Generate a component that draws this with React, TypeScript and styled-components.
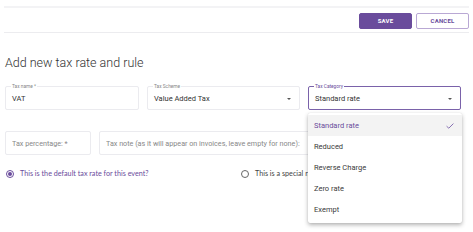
import React from "react";
import styled, { createGlobalStyle } from "styled-components";

const Global = createGlobalStyle`
  html, body { margin: 0; padding: 0; background: #fff; }
  body { font-family: Roboto, "Liberation Sans", sans-serif; color: #333; }
  * { box-sizing: border-box; }
`;

const Page = styled.div`
  width: 473px;
  height: 232px;
  overflow: hidden;
  padding: 6px 4px 0 4px;
`;

const Toolbar = styled.div`
  border-top: 2px solid #f3f3f5;
  border-bottom: 1px solid #ececef;
  height: 27px;
  display: flex;
  justify-content: flex-end;
  align-items: center;
  gap: 4px;
  padding-top: 1px;
`;

const Button = styled.button<{ $primary?: boolean }>`
  width: 53px;
  height: 16px;
  border-radius: 2px;
  font-family: Roboto, "Liberation Sans", sans-serif;
  font-weight: 700;
  font-size: 6px;
  letter-spacing: 0.2px;
  padding: 0;
  cursor: pointer;
  background: ${(p) => (p.$primary ? "#6a4c9c" : "#fff")};
  color: ${(p) => (p.$primary ? "#fff" : "#6a4c9c")};
  border: 1px solid ${(p) => (p.$primary ? "#6a4c9c" : "#b9a8d4")};
`;

const Title = styled.h1`
  margin: 22px 0 0 1px;
  font-size: 12.5px;
  font-weight: 300;
  color: #333;
  line-height: 16px;
`;

const Row = styled.div<{ $top: number }>`
  display: flex;
  gap: 8px;
  margin-top: ${(p) => p.$top}px;
  margin-left: 1px;
`;

const Field = styled.div<{ $w: number; $active?: boolean }>`
  position: relative;
  width: ${(p) => p.$w}px;
  height: 24px;
  border: 1px solid ${(p) => (p.$active ? "#7a62aa" : "#ebebef")};
  border-radius: 2px;
  display: flex;
  align-items: center;
  padding: 1px 6px 0 6px;
  font-size: 7.5px;
  color: #333;
  background: #fff;
`;

const Legend = styled.span<{ $active?: boolean }>`
  position: absolute;
  top: -3px;
  left: 5px;
  padding: 0 1px;
  background: #fff;
  font-size: 4.8px;
  line-height: 5px;
  color: ${(p) => (p.$active ? "#6a4c9c" : "#888")};
`;

const Placeholder = styled.span`
  color: #888;
  font-size: 7.2px;
  white-space: nowrap;
  overflow: hidden;
`;

const Value = styled.span`
  flex: 1;
`;

const Caret = styled.span`
  width: 0;
  height: 0;
  border-left: 2.5px solid transparent;
  border-right: 2.5px solid transparent;
  border-top: 2.5px solid #555;
  margin-right: 2px;
`;

const RadioRow = styled.div`
  display: flex;
  margin-top: 14px;
  margin-left: 2px;
`;

const RadioItem = styled.label<{ $w?: number; $checked?: boolean }>`
  display: flex;
  align-items: center;
  gap: 6px;
  width: ${(p) => (p.$w ? `${p.$w}px` : "auto")};
  font-family: Lato, "Liberation Sans", sans-serif;
  font-size: 7.2px;
  color: ${(p) => (p.$checked ? "#6a4c9c" : "#444")};
  white-space: nowrap;
`;

const RadioCircle = styled.span<{ $checked?: boolean }>`
  width: 8px;
  height: 8px;
  border-radius: 50%;
  border: 1px solid ${(p) => (p.$checked ? "#6a4c9c" : "#666")};
  display: flex;
  align-items: center;
  justify-content: center;
  &::after {
    content: "";
    width: 4px;
    height: 4px;
    border-radius: 50%;
    background: ${(p) => (p.$checked ? "#6a4c9c" : "transparent")};
  }
`;

const Menu = styled.ul`
  position: absolute;
  top: 26px;
  left: -1px;
  width: 154px;
  margin: 0;
  padding: 2px 0 3px 0;
  list-style: none;
  background: #fff;
  box-shadow: 0 2px 4px rgba(0, 0, 0, 0.3), 0 0 1px rgba(0, 0, 0, 0.15);
  border-radius: 2px;
  z-index: 5;
`;

const MenuItem = styled.li<{ $selected?: boolean }>`
  height: 21px;
  display: flex;
  align-items: center;
  justify-content: space-between;
  padding: 0 8px 0 6px;
  font-size: 7.5px;
  color: ${(p) => (p.$selected ? "#6a4c9c" : "#3a3a3a")};
  background: ${(p) => (p.$selected ? "#f3f3f3" : "#fff")};
`;

const Check = () => (
  <svg width="8" height="6" viewBox="0 0 8 6">
    <path d="M0.6 3.2 L2.8 5.2 L7.4 0.6" fill="none" stroke="#7a62aa" strokeWidth="0.9" />
  </svg>
);

const options = ["Standard rate", "Reduced", "Reverse Charge", "Zero rate", "Exempt"];

export default function App() {
  return (
    <>
      <Global />
      <Page>
        <Toolbar>
          <Button $primary>SAVE</Button>
          <Button>CANCEL</Button>
        </Toolbar>
        <Title>Add new tax rate and rule</Title>
        <Row $top={15}>
          <Field $w={134}>
            <Legend>Tax name *</Legend>
            <Value>VAT</Value>
          </Field>
          <Field $w={153}>
            <Legend>Tax Scheme</Legend>
            <Value>Value Added Tax</Value>
            <Caret />
          </Field>
          <Field $w={153} $active>
            <Legend $active>Tax Category</Legend>
            <Value>Standard rate</Value>
            <Caret />
            <Menu>
              {options.map((o, i) => (
                <MenuItem key={o} $selected={i === 0}>
                  {o}
                  {i === 0 && <Check />}
                </MenuItem>
              ))}
            </Menu>
          </Field>
        </Row>
        <Row $top={21}>
          <Field $w={86}>
            <Placeholder>Tax percentage: *</Placeholder>
          </Field>
          <Field $w={300}>
            <Placeholder>Tax note (as it will appear on invoices, leave empty for none):</Placeholder>
          </Field>
        </Row>
        <RadioRow>
          <RadioItem $w={235} $checked>
            <RadioCircle $checked />
            This is the default tax rate for this event?
          </RadioItem>
          <RadioItem>
            <RadioCircle />
            This is a special rate
          </RadioItem>
        </RadioRow>
      </Page>
    </>
  );
}
